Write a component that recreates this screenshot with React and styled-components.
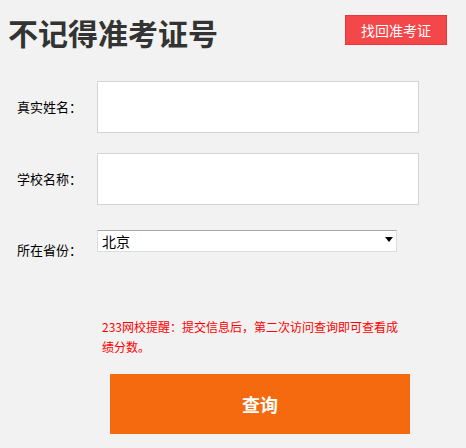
import React from 'react';
import styled, { createGlobalStyle } from 'styled-components';

const Global = createGlobalStyle`
  html, body {
    margin: 0;
    padding: 0;
    background: #f2f2f2;
  }
  body {
    font-family: "Noto Sans CJK SC", "Noto Sans", sans-serif;
    color: #000;
  }
`;

const Page = styled.div`
  width: 466px;
  height: 448px;
  box-sizing: border-box;
  padding: 15px 19px 0 8px;
  overflow: hidden;
`;

const Header = styled.div`
  display: flex;
  justify-content: space-between;
  align-items: flex-start;
`;

const Title = styled.h1`
  margin: 2px 0 0;
  font-size: 30px;
  line-height: 30px;
  font-weight: 700;
  color: #333;
`;

const FindButton = styled.button`
  width: 102px;
  height: 30px;
  box-sizing: border-box;
  border: 1px solid #e8363a;
  background: #f4474a;
  color: #fff;
  font-family: inherit;
  font-size: 14px;
  padding: 0;
  cursor: pointer;
`;

const Form = styled.form`
  margin: 34px 0 0 9px;
`;

const Row = styled.div`
  display: flex;
  align-items: ${({ $top }) => ($top ? 'flex-start' : 'center')};
  margin-bottom: ${({ $gap }) => $gap ?? 20}px;
`;

const Label = styled.label`
  width: 80px;
  font-size: 13px;
  line-height: 16px;
  margin-top: ${({ $offset }) => $offset || 0}px;
`;

const TextInput = styled.input`
  width: 322px;
  height: 52px;
  box-sizing: border-box;
  border: 1px solid #d4d4d4;
  background: #fff;
  outline: none;
`;

const SelectWrap = styled.div`
  position: relative;
  width: 300px;
  height: 22px;
`;

const Select = styled.select`
  appearance: none;
  width: 100%;
  height: 100%;
  box-sizing: border-box;
  border: 1px solid #dcdcdc;
  border-top-color: #a9a9a9;
  border-radius: 0;
  background: #fff;
  padding: 0 0 0 4px;
  font-family: inherit;
  font-size: 14px;
  color: #000;
  outline: none;
`;

const Arrow = styled.span`
  position: absolute;
  right: 4px;
  top: 9px;
  width: 0;
  height: 0;
  border-left: 4px solid transparent;
  border-right: 4px solid transparent;
  border-top: 5px solid #000;
  pointer-events: none;
`;

const Note = styled.p`
  margin: 59px 0 0 85px;
  width: 304px;
  font-size: 12px;
  line-height: 20px;
  color: #f00;
`;

const Submit = styled.button`
  display: block;
  margin: 17px 0 0 93px;
  width: 300px;
  height: 60px;
  border: 0;
  background: #f56a0e;
  color: #fff;
  font-family: inherit;
  font-size: 18px;
  font-weight: 700;
  cursor: pointer;
`;

export default function App() {
  return (
    <Page>
      <Global />
      <Header>
        <Title>不记得准考证号</Title>
        <FindButton type="button">找回准考证</FindButton>
      </Header>
      <Form onSubmit={(e) => e.preventDefault()}>
        <Row>
          <Label>真实姓名：</Label>
          <TextInput type="text" />
        </Row>
        <Row $gap={23}>
          <Label>学校名称：</Label>
          <TextInput type="text" />
        </Row>
        <Row $top $gap={0}>
          <Label $offset={14}>所在省份：</Label>
          <SelectWrap>
            <Select defaultValue="北京">
              <option>北京</option>
              <option>天津</option>
              <option>上海</option>
            </Select>
            <Arrow />
          </SelectWrap>
        </Row>
        <Note>233网校提醒：提交信息后，第二次访问查询即可查看成绩分数。</Note>
        <Submit type="submit">查询</Submit>
      </Form>
    </Page>
  );
}
